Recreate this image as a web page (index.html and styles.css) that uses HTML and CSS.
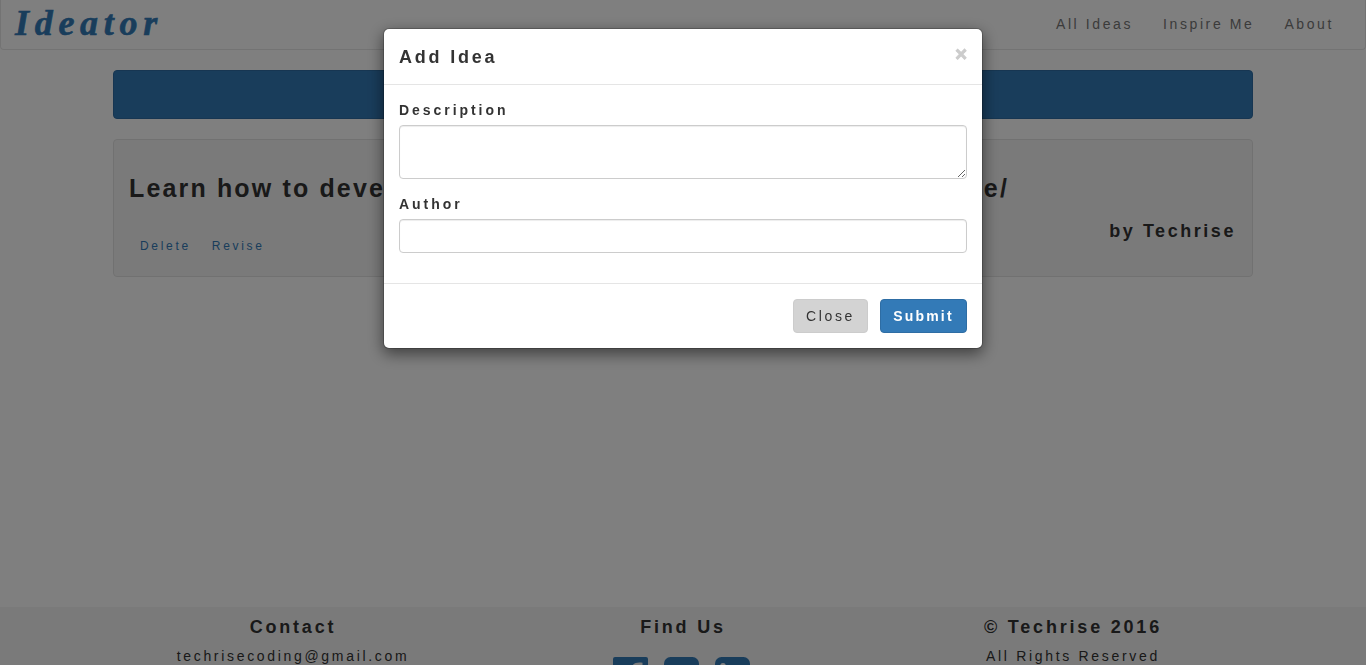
FILE: index.html
```html
<!DOCTYPE html>
<html lang="en">
<head>
<meta charset="utf-8">
<title>Ideator</title>
<link rel="stylesheet" href="styles.css">
</head>
<body>
<div class="page">
  <nav class="navbar">
    <a class="brand">Ideator</a>
    <div class="nav-links"><a>All Ideas</a><a>Inspire Me</a><a>About</a></div>
  </nav>
  <main class="container">
    <div class="add-bar"></div>
    <section class="well">
      <h2 class="idea"><span>Learn how to deve</span><span>e/</span></h2>
      <div class="idea-meta">
        <div class="actions"><a>Delete</a><a>Revise</a></div>
        <h4 class="author">by Techrise</h4>
      </div>
    </section>
  </main>
  <footer class="footer">
    <div class="col"><h4>Contact</h4><p class="mail">techrisecoding@gmail.com</p></div>
    <div class="col"><h4>Find Us</h4>
      <div class="social">
        <svg width="35" height="35" viewBox="0 0 35 35"><path fill="#337ab7" d="M2 0H33Q35 0 35 2V33Q35 35 33 35H24V21.500H28.500L29.200 16.200H24V13C24 11 25 10.500 27 10.500H29.500V5.800C24 5 18.500 6 18.500 12.500V16.200H14V21.500H18.500V35H2Q0 35 0 33V2Q0 0 2 0Z"/></svg>
        <svg width="35" height="35" viewBox="0 0 35 35"><rect width="35" height="35" rx="6.500" fill="#337ab7"/><path fill="#fff" d="M29 11q-1 1.500-2.400 2.400C27 22 20 28 13 28q-4 0-7-2 4 0 6.500-2-3.500-.5-4.300-3.200h2q-3.800-1.500-3.700-4.700l2 .5q-3-2.500-1.300-6 4 4.500 9.300 4.700c-1-5 4-7.500 7.500-4.500l3-1-2 2.500Z"/></svg>
        <svg width="35" height="35" viewBox="0 0 35 35"><rect width="35" height="35" rx="6.500" fill="#337ab7"/><circle cx="8" cy="8.700" r="2.800" fill="#fff"/><path fill="#fff" d="M5.500 13.500h5V29h-5zM13.500 13.500h5v2.200c3-4.200 11-3 11 4.500V29h-5v-8c0-4.500-6-4.500-6 0v8h-5z"/></svg>
      </div>
    </div>
    <div class="col"><h4>© Techrise 2016</h4><p>All Rights Reserved</p></div>
  </footer>
</div>
<div class="overlay">
  <div class="modal">
    <header class="modal-head"><h4>Add Idea</h4><button class="x">×</button></header>
    <form class="modal-body">
      <label>Description</label>
      <textarea></textarea>
      <label>Author</label>
      <input type="text">
    </form>
    <div class="modal-foot"><button class="btn">Close</button><button class="btn primary">Submit</button></div>
  </div>
</div>
</body>
</html>
```
FILE: styles.css
```css
* { box-sizing: border-box; }
body { margin: 0; height: 665px; overflow: hidden; background: #fff; color: #333; font: 14px/20px "Liberation Sans", Arial, sans-serif; letter-spacing: 2.68px; }
h2, h4, p { margin: 0; }
h4 { font-size: 18px; line-height: 20px; font-weight: bold; letter-spacing: 2.8px; }
.page { height: 665px; overflow: hidden; display: flex; flex-direction: column; }
.navbar { height: 50px; flex: none; display: flex; justify-content: space-between; border: 1px solid #e7e7e7; border-top: 0; border-radius: 0 0 4px 4px; padding: 0 15px 0 14px; }
.brand { color: #337ab7; font: italic bold 36px/47px "Liberation Serif", serif; letter-spacing: 5.7px; -webkit-text-stroke: 0.6px #337ab7; }
.nav-links { display: flex; color: #777; letter-spacing: 2.6px; }
.nav-links a { padding: 14px 15px; }
.nav-links a:last-child { padding-right: 16px; }
.container { width: 1140px; margin: 20px auto 0; flex: 1; }
.add-bar { height: 49px; background: #337ab7; border: 1px solid #2e6da4; border-radius: 4px; }
.well { margin-top: 20px; height: 138px; background: #f5f5f5; border: 1px solid #e3e3e3; border-radius: 4px; padding: 32px 15px 0; }
.idea { width: 880px; display: flex; justify-content: space-between; font-size: 25px; line-height: 32px; letter-spacing: 2.15px; }
.idea-meta { display: flex; justify-content: space-between; margin-top: 17px; padding-right: 1px; }
.actions { display: flex; gap: 21px; padding: 15px 0 0 11px; font-size: 12px; color: #337ab7; }
.author { letter-spacing: 2.55px; }
.footer { height: 58px; flex: none; background: #f5f5f5; display: flex; padding: 10px 98px 0; }
.col { flex: 1; text-align: center; }
.col p { margin-top: 9px; }
.social { display: flex; justify-content: center; gap: 16px; margin: 20px 3px 0 0; }
.overlay { position: fixed; inset: 0; background: rgba(0,0,0,.5); display: flex; justify-content: center; align-items: flex-start; padding-top: 28px; }
.modal { width: 600px; height: 321px; background: #fff; background-clip: padding-box; border: 1px solid rgba(0,0,0,.2); border-radius: 6px; box-shadow: 0 5px 15px rgba(0,0,0,.5); }
.modal-head { height: 56px; display: flex; justify-content: space-between; padding: 18px 15px 0; border-bottom: 1px solid #e5e5e5; }
.x { border: 0; background: none; padding: 0; height: 14px; width: 12px; font: bold 20px/14px "Liberation Sans", sans-serif; color: #ccc; -webkit-text-stroke: 1px #ccc; }
.modal-body { height: 198px; padding: 15px; }
label { display: block; font-weight: bold; margin-bottom: 5px; letter-spacing: 2.95px; }
textarea, input { display: block; width: 100%; border: 1px solid #ccc; border-radius: 4px; box-shadow: inset 0 1px 1px rgba(0,0,0,.075); background: #fff; }
textarea { height: 54px; margin-bottom: 15px; resize: vertical; }
input { height: 34px; }
.modal-foot { height: 65px; border-top: 1px solid #e5e5e5; padding: 15px; display: flex; justify-content: flex-end; gap: 12px; }
.btn { height: 34px; width: 75px; padding: 0; border: 1px solid #ccc; border-radius: 4px; background: #d3d3d3; color: #333; font: 14px "Liberation Sans", sans-serif; letter-spacing: 2.6px; }
.primary { width: 87px; background: #337ab7; border-color: #2e6da4; color: #fff; font-weight: bold; letter-spacing: 2.2px; }
```
